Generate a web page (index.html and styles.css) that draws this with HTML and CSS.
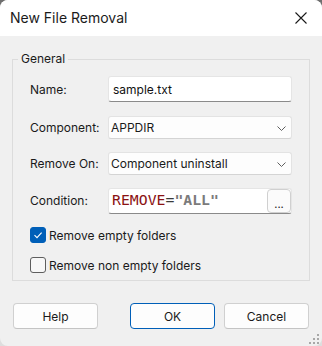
FILE: index.html
```html
<!DOCTYPE html>
<html>
<head>
<meta charset="utf-8">
<link rel="stylesheet" href="styles.css">
</head>
<body>
<div class="window">
  <div class="titlebar">
    <span class="title">New File Removal</span>
    <span class="close">
      <svg width="12" height="12" viewBox="0 0 12 12"><path d="M0.5 0.5 L11.5 11.5 M11.5 0.5 L0.5 11.5" stroke="#1a1a1a" stroke-width="1.1" fill="none"/></svg>
    </span>
  </div>
  <div class="content">
    <div class="group">
      <span class="legend">General</span>
      <div class="form">
        <label class="label">Name:</label>
        <div class="input name-input">sample.txt</div>
        <label class="label">Component:</label>
        <div class="combo"><span>APPDIR</span><svg class="chev" width="9" height="5" viewBox="0 0 9 5"><path d="M0.5 0.5 L4.5 4.5 L8.5 0.5" stroke="#5f5f5f" fill="none" stroke-width="1"/></svg></div>
        <label class="label">Remove On:</label>
        <div class="combo"><span>Component uninstall</span><svg class="chev" width="9" height="5" viewBox="0 0 9 5"><path d="M0.5 0.5 L4.5 4.5 L8.5 0.5" stroke="#5f5f5f" fill="none" stroke-width="1"/></svg></div>
        <label class="label">Condition:</label>
        <div class="input cond-input">
          <span class="code"><span class="kw">REMOVE</span><span class="op">=</span><span class="str">"ALL"</span></span>
          <span class="browse">...</span>
        </div>
      </div>
      <div class="checks">
        <div class="check"><span class="box checked"><svg width="16" height="16" viewBox="0 0 16 16"><path d="M4.5 8.2 L7 10.6 L11.6 5.6" stroke="#fff" stroke-width="1.1" fill="none"/></svg></span><span>Remove empty folders</span></div>
        <div class="check"><span class="box"></span><span>Remove non empty folders</span></div>
      </div>
    </div>
    <div class="buttons">
      <span class="btn">Help</span>
      <span class="spacer"></span>
      <span class="btn default">OK</span>
      <span class="btn">Cancel</span>
    </div>
    <svg class="grip" width="12" height="12" viewBox="0 0 12 12" fill="#a8a8a8">
      <rect x="9" y="1" width="2" height="2"/>
      <rect x="5" y="5" width="2" height="2"/><rect x="9" y="5" width="2" height="2"/>
      <rect x="1" y="9" width="2" height="2"/><rect x="5" y="9" width="2" height="2"/><rect x="9" y="9" width="2" height="2"/>
    </svg>
  </div>
</div>
</body>
</html>
```
FILE: styles.css
```css
html, body { margin: 0; padding: 0; }
body {
  width: 322px; height: 346px; overflow: hidden;
  background: linear-gradient(#6e6e6e, #d6d6d6 40%, #dedede);
  font-family: "Inter", "Noto Sans", sans-serif;
  font-size: 12px; color: #1a1a1a;
}
.window {
  width: 322px; height: 346px;
  border-radius: 8px; overflow: hidden;
  display: flex; flex-direction: column;
  background: #f0f0f0;
}
.titlebar {
  height: 36px; flex: none;
  background: #ffffff;
  display: flex; align-items: center;
  padding-left: 10px;
}
.title { font-size: 14px; line-height: 36px; color: #1b1b1b; flex: 1; }
.close { width: 12px; height: 12px; margin-right: 15px; display: flex; }
.content { flex: 1; position: relative; }
.group {
  position: relative;
  margin: 23px 12px 0 12px;
  border: 1px solid #dcdcdc;
  padding: 16px 17px 7px 17px;
}
.legend {
  position: absolute; top: -8px; left: 5px;
  padding: 0 3px; line-height: 14px;
  background: #f0f0f0; color: #1a1a1a;
}
.form {
  display: grid;
  grid-template-columns: 78px 1fr;
  row-gap: 13px;
  align-items: center;
}
.label { line-height: 16px; color: #1a1a1a; }
.input {
  box-sizing: border-box; height: 26px;
  background: #ffffff;
  border: 1px solid #e5e5e5; border-bottom-color: #8a8a8a;
  border-radius: 3px;
  display: flex; align-items: center;
  padding-left: 4px;
}
.name-input { margin-bottom: 1px; color: #111; }
.combo {
  box-sizing: border-box; height: 23px;
  background: #fdfdfd;
  border: 1px solid #e3e3e3; border-bottom-color: #d4d4d4;
  border-radius: 3px;
  display: flex; align-items: center; justify-content: space-between;
  padding: 0 5px 0 2px;
}
.chev { display: block; margin-top: 1px; }
.cond-input { padding: 0 0 0 3px; justify-content: space-between; align-items: stretch; }
.code {
  font-family: "DejaVu Sans Mono", "Liberation Mono", monospace;
  font-size: 14.8px; line-height: 24px;
  display: flex; align-items: center; padding-bottom: 3px;
}
.kw { color: #8b1212; }
.op { color: #3a3a3a; }
.str { color: #7b7b7b; font-weight: bold; }
.browse {
  box-sizing: border-box; width: 24px; height: 24px;
  border: 1px solid #d0d0d0; border-radius: 4px;
  background: #fbfbfb; color: #1a1a1a;
  font-size: 11px; line-height: 22px; text-align: center;
  padding-top: 3px;
}
.checks { margin-top: 13px; display: flex; flex-direction: column; row-gap: 14px; }
.check { display: flex; align-items: center; height: 16px; column-gap: 3px; color: #1a1a1a; }
.box {
  box-sizing: border-box; width: 16px; height: 16px; flex: none;
  border: 1px solid #5e5e5e; border-radius: 3px; background: #f7f7f7;
  display: flex;
}
.box.checked { background: #005fb8; border-color: #005fb8; }
.box.checked svg { margin: -1px; }
.buttons {
  display: flex; align-items: center; column-gap: 9px;
  margin-top: 22px; padding: 0 13px;
}
.spacer { flex: 1; }
.btn {
  box-sizing: border-box; width: 85px; height: 26px;
  border: 1px solid #d0d0d0; border-bottom-color: #c4c4c4; border-radius: 4px;
  background: #fdfdfd; color: #1a1a1a;
  display: flex; align-items: center; justify-content: center;
}
.btn.default { border-color: #005fb8; }
.grip { position: absolute; right: 2px; bottom: 1px; }
```
